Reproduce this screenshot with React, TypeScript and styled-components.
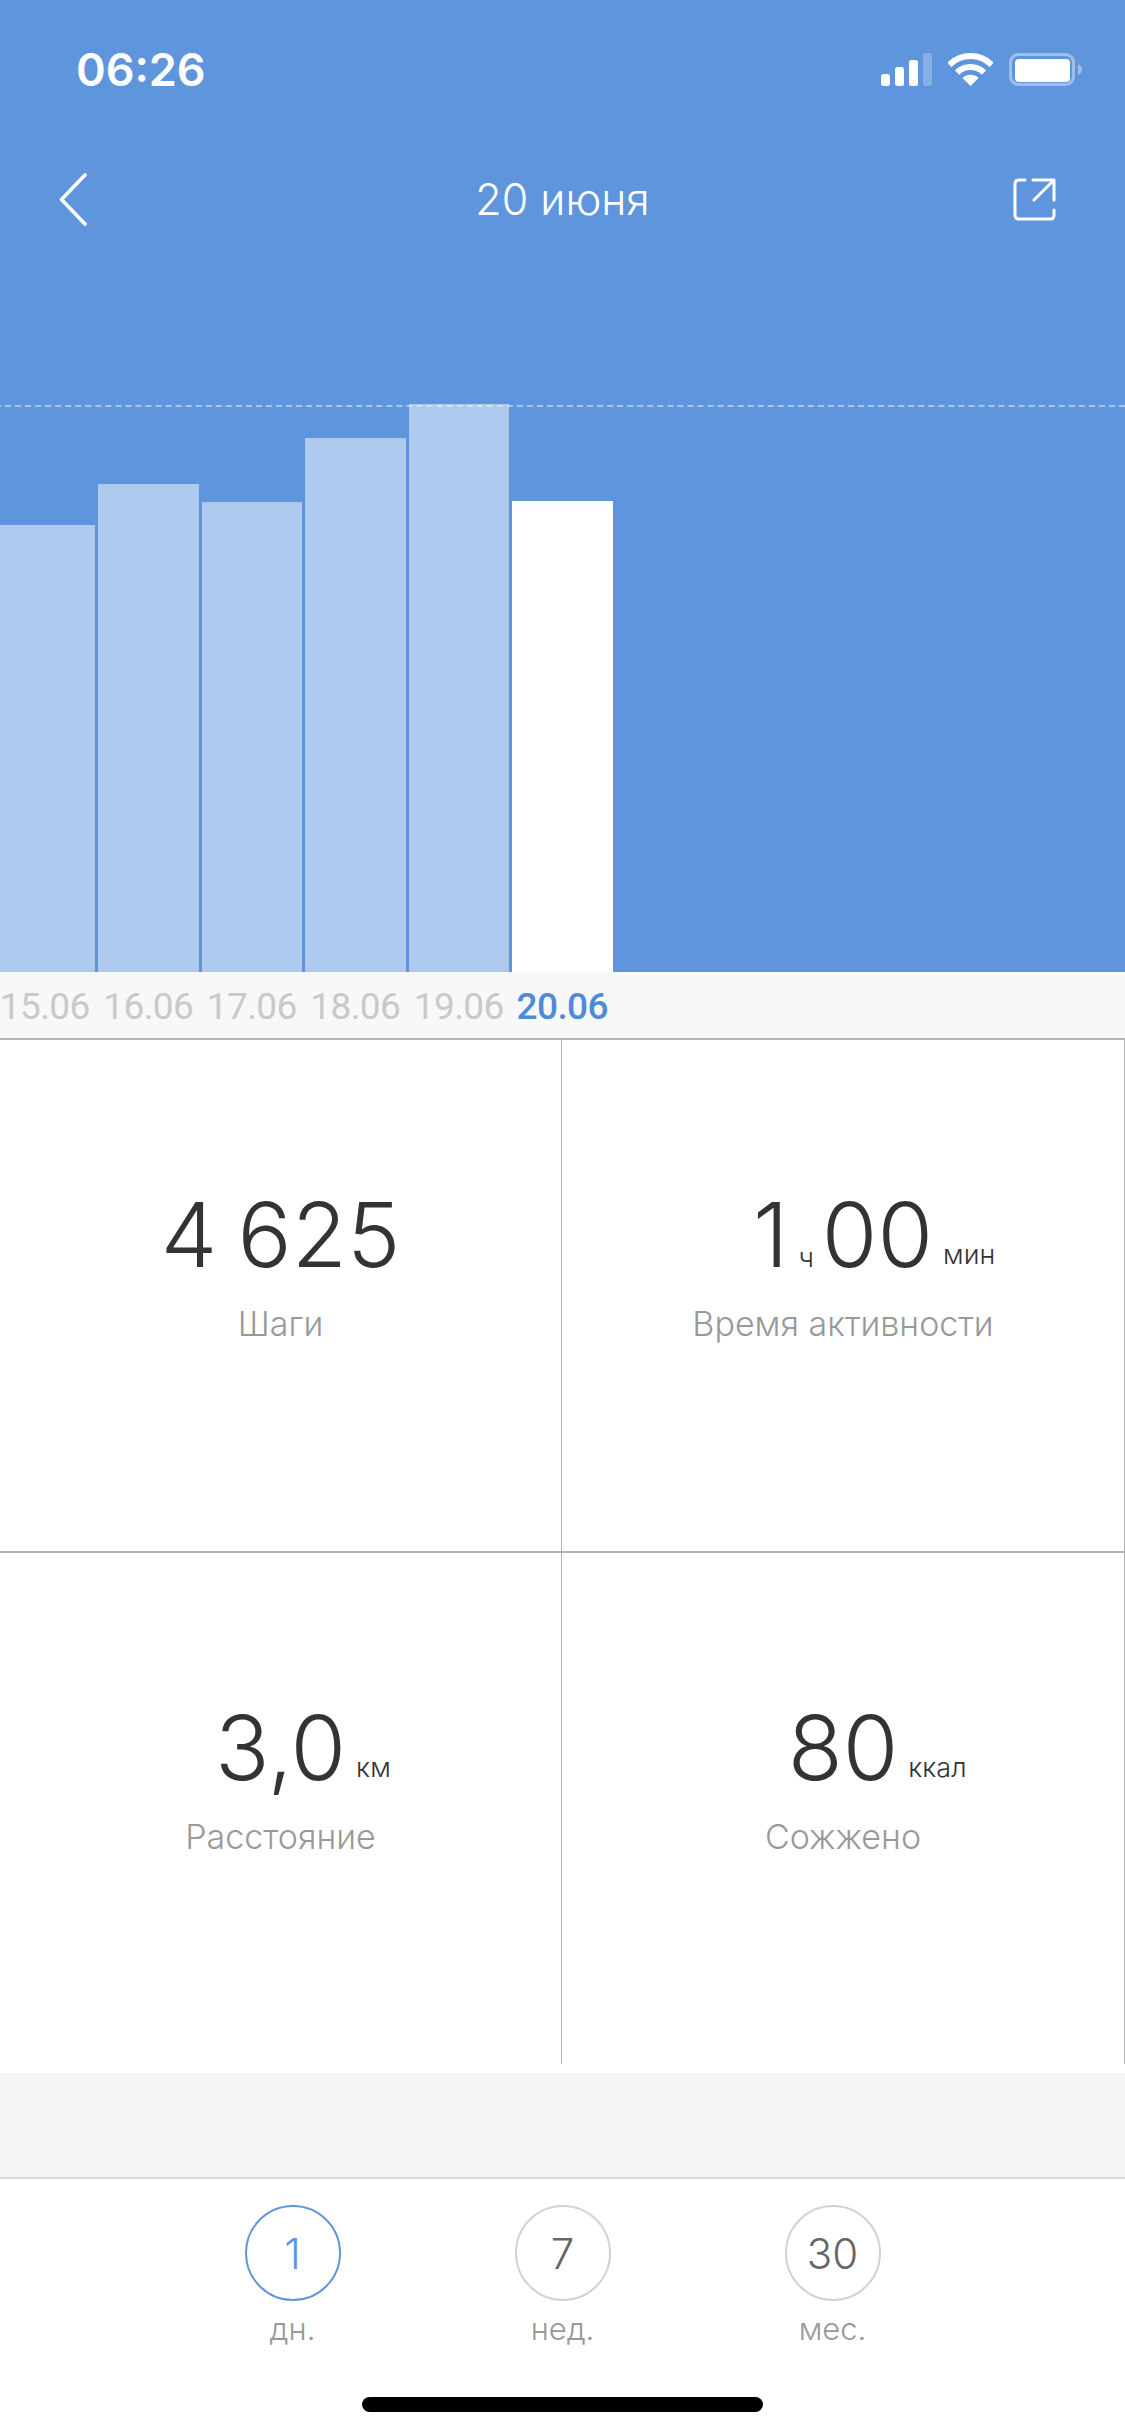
import React from 'react'
import styled, { createGlobalStyle } from 'styled-components'

const blue = '#5f95dd'

const GlobalStyle = createGlobalStyle`
  html, body {
    margin: 0;
    padding: 0;
    background: #fff;
  }

  * {
    box-sizing: border-box;
  }
`

const Page = styled.div`
  display: flex;
  flex-direction: column;
  font-family: Inter, 'Liberation Sans', sans-serif;
  height: 2436px;
  overflow: hidden;
  position: relative;
  width: 1125px;
`

const Header = styled.header`
  background: ${blue};
  color: #fff;
  display: flex;
  flex-direction: column;
  height: 972px;
`

const StatusBar = styled.div`
  align-items: center;
  display: flex;
  height: 138px;
  justify-content: space-between;
  padding: 0 43px 0 76px;
`

const Time = styled.span`
  font-size: 45px;
  font-weight: 600;
`

const StatusIcons = styled.div`
  align-items: center;
  display: flex;
  gap: 16px;
`

const Nav = styled.nav`
  align-items: center;
  display: grid;
  grid-template-columns: 1fr auto 1fr;
  height: 122px;
  padding: 0 69px 0 59px;
`

const Title = styled.h1`
  font-size: 43px;
  font-weight: 300;
  margin: 0 0 0 10px;
`

const ShareWrap = styled.div`
  display: flex;
  justify-content: flex-end;
`

const Chart = styled.div`
  align-items: flex-end;
  display: flex;
  flex: 1;
  gap: 3px;
  margin-left: -5.5px;
  position: relative;
`

const Bar = styled.div<{ $height: number; $active?: boolean }>`
  background: ${p => (p.$active ? '#fff' : '#aec9ee')};
  flex: 0 0 100.5px;
  height: ${p => p.$height}px;
`

const GoalLine = styled.div`
  border-top: 2px dashed rgba(255, 255, 255, 0.45);
  left: 0;
  position: absolute;
  right: 0;
  top: 145px;
`

const DateStrip = styled.div`
  background: #f8f8f8;
  display: flex;
  font-family: Roboto, 'Liberation Sans', sans-serif;
  gap: 3px;
  height: 66px;
  margin-left: -5.5px;
  padding-top: 3px;
  width: 1131px;
`

const DateLabel = styled.span<{ $active?: boolean }>`
  align-self: center;
  color: ${p => (p.$active ? '#4d8ad8' : '#c9c9c9')};
  flex: 0 0 100.5px;
  font-size: 37px;
  font-weight: ${p => (p.$active ? 500 : 400)};
  letter-spacing: -0.6px;
  text-align: center;
`

const StatsGrid = styled.section`
  border-top: 2px solid #b4b4b4;
  display: grid;
  grid-template-columns: 562px 563px;
  grid-template-rows: 513px 511px;
  height: 1026px;
`

const StatCell = styled.div<{ $lastRow?: boolean }>`
  align-items: center;
  border-bottom: ${p => (p.$lastRow ? 'none' : '2px solid #b4b4b4')};
  border-right: 1px solid #b4b4b4;
  display: flex;
  flex-direction: column;
  padding-top: 142px;
`

const ValueRow = styled.div`
  align-items: baseline;
  color: #333;
  display: flex;
  font-size: 90px;
  font-weight: 300;
  line-height: 106px;
  position: relative;
  word-spacing: -5px;
`

const InlineUnit = styled.span`
  font-size: 27px;
  font-weight: 300;
  line-height: 26px;
  margin: 0 8px 0 10px;
`

const TrailingUnit = styled.span`
  bottom: 20px;
  font-size: 27px;
  font-weight: 300;
  left: calc(100% + 10px);
  line-height: 26px;
  position: absolute;
  white-space: nowrap;
`

const StatLabel = styled.span`
  color: #999;
  font-size: 34px;
  font-weight: 300;
  margin-top: 15px;
`

const Spacer = styled.div`
  background: #f5f5f5;
  border-bottom: 2px solid #d8d8d8;
  flex: 0 0 106px;
  margin-top: 9px;
`

const PeriodBar = styled.div`
  display: flex;
  gap: 174px;
  justify-content: center;
  padding-top: 26px;
`

const PeriodItem = styled.div`
  align-items: center;
  display: flex;
  flex-direction: column;
  width: 96px;
`

const PeriodCircle = styled.div<{ $active?: boolean }>`
  align-items: center;
  border: 2px solid ${p => (p.$active ? blue : '#d2d2d2')};
  border-radius: 50%;
  color: ${p => (p.$active ? blue : '#666')};
  display: flex;
  font-size: 42px;
  font-weight: 300;
  height: 96px;
  justify-content: center;
  width: 96px;
`

const PeriodLabel = styled.span`
  color: #999;
  font-size: 31px;
  font-weight: 300;
  margin-top: 9px;
  white-space: nowrap;
`

const HomeIndicator = styled.div`
  background: #000;
  border-radius: 8px;
  bottom: 24px;
  height: 15px;
  left: 362px;
  position: absolute;
  width: 401px;
`

const bars = [447, 488, 470, 534, 568, 471]
const dates = ['15.06', '16.06', '17.06', '18.06', '19.06', '20.06']
const periods = [
  { value: '1', label: 'дн.' },
  { value: '7', label: 'нед.' },
  { value: '30', label: 'мес.' }
]

function SignalIcon(): JSX.Element {
  return (
    <svg width="51" height="33" viewBox="0 0 51 33" fill="#fff">
      <rect x="0" y="21" width="9" height="12" rx="2.5" />
      <rect x="14" y="14" width="9" height="19" rx="2.5" />
      <rect x="28" y="7" width="9" height="26" rx="2.5" />
      <rect x="42" y="0" width="9" height="33" rx="2.5" opacity="0.25" />
    </svg>
  )
}

function WifiIcon(): JSX.Element {
  return (
    <svg width="45" height="33" viewBox="0 0 45 33" fill="none" stroke="#fff" strokeWidth="6">
      <path d="M1.3 11.8 A30 30 0 0 1 43.7 11.8" />
      <path d="M9.1 19.6 A19 19 0 0 1 35.9 19.6" />
      <path d="M22.5 33 L14.5 25 A11.3 11.3 0 0 1 30.5 25 Z" fill="#fff" stroke="none" />
    </svg>
  )
}

function BatteryIcon(): JSX.Element {
  return (
    <svg width="73" height="33" viewBox="0 0 73 33" fill="#fff">
      <rect x="1.5" y="1.5" width="63" height="30" rx="8" fill="none" stroke="#fff" strokeWidth="3" opacity="0.4" />
      <rect x="6" y="6" width="55" height="23" rx="4" />
      <path d="M69 11 C71.5 12 73 14 73 16.5 C73 19 71.5 21 69 22 Z" opacity="0.4" />
    </svg>
  )
}

function BackIcon(): JSX.Element {
  return (
    <svg width="28" height="53" viewBox="0 0 28 53" fill="none" stroke="#fff" strokeWidth="3.6" strokeLinecap="round" strokeLinejoin="round">
      <path d="M26 2 L2.5 26.5 L26 51" />
    </svg>
  )
}

function ShareIcon(): JSX.Element {
  return (
    <svg width="43" height="43" viewBox="0 0 43 43" fill="none" stroke="#fff" strokeWidth="3" strokeLinecap="round" strokeLinejoin="round">
      <path d="M12 2 H6 Q2 2 2 6 V37 Q2 41 6 41 H37 Q41 41 41 37 V32" />
      <path d="M20 2 H41 V22" />
      <path d="M21 22 L39 4" />
    </svg>
  )
}

function App(): JSX.Element {
  return (
    <Page>
      <GlobalStyle />
      <Header>
        <StatusBar>
          <Time>06:26</Time>
          <StatusIcons>
            <SignalIcon />
            <WifiIcon />
            <BatteryIcon />
          </StatusIcons>
        </StatusBar>
        <Nav>
          <BackIcon />
          <Title>20 июня</Title>
          <ShareWrap>
            <ShareIcon />
          </ShareWrap>
        </Nav>
        <Chart>
          {bars.map((height, idx) => (
            <Bar key={idx} $height={height} $active={idx === bars.length - 1} />
          ))}
          <GoalLine />
        </Chart>
      </Header>

      <DateStrip>
        {dates.map((date, idx) => (
          <DateLabel key={date} $active={idx === dates.length - 1}>
            {date}
          </DateLabel>
        ))}
      </DateStrip>

      <StatsGrid>
        <StatCell>
          <ValueRow>4 625</ValueRow>
          <StatLabel>Шаги</StatLabel>
        </StatCell>
        <StatCell>
          <ValueRow>
            1<InlineUnit>ч</InlineUnit>00
            <TrailingUnit>мин</TrailingUnit>
          </ValueRow>
          <StatLabel>Время активности</StatLabel>
        </StatCell>
        <StatCell $lastRow>
          <ValueRow>
            3,0
            <TrailingUnit>км</TrailingUnit>
          </ValueRow>
          <StatLabel>Расстояние</StatLabel>
        </StatCell>
        <StatCell $lastRow>
          <ValueRow>
            80
            <TrailingUnit>ккал</TrailingUnit>
          </ValueRow>
          <StatLabel>Сожжено</StatLabel>
        </StatCell>
      </StatsGrid>

      <Spacer />

      <PeriodBar>
        {periods.map((period, idx) => (
          <PeriodItem key={period.value}>
            <PeriodCircle $active={idx === 0}>{period.value}</PeriodCircle>
            <PeriodLabel>{period.label}</PeriodLabel>
          </PeriodItem>
        ))}
      </PeriodBar>

      <HomeIndicator />
    </Page>
  )
}

export default App
